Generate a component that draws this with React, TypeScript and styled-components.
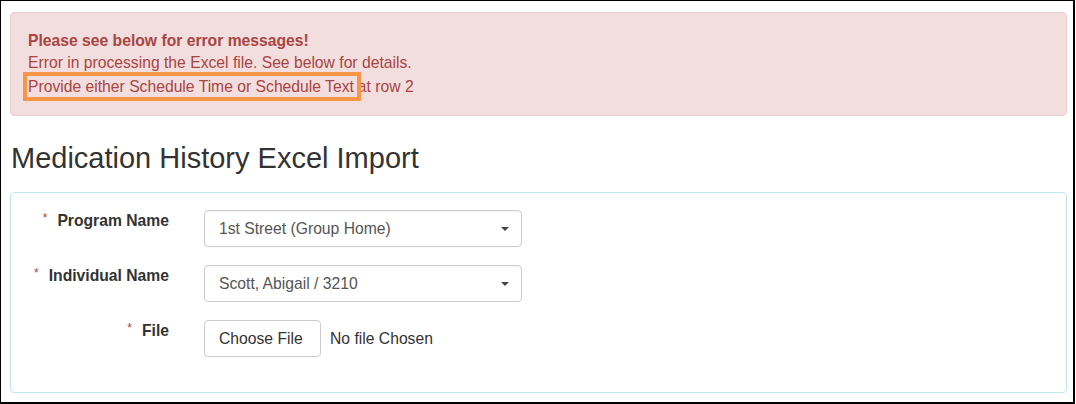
import styled, { createGlobalStyle } from "styled-components";

const GlobalStyle = createGlobalStyle`
  html, body {
    margin: 0;
    padding: 0;
    background: #fff;
  }
  body {
    font-family: "Liberation Sans", Arial, sans-serif;
    font-size: 15.7px;
    line-height: 22px;
    color: #333;
  }
`;

const Frame = styled.div`
  box-sizing: border-box;
  width: 1075px;
  height: 404px;
  border: 1px solid #000;
  border-right-width: 2px;
  border-bottom-width: 2px;
  padding: 11px 6px 0 9px;
  overflow: hidden;
`;

const Alert = styled.div`
  background-color: #f2dede;
  border: 1px solid #ebccd1;
  border-radius: 4px;
  color: #a94442;
  padding: 17px;
`;

const AlertLine = styled.div<{ $bold?: boolean; $gap?: number }>`
  font-weight: ${(p) => (p.$bold ? "bold" : "normal")};
  margin-top: ${(p) => p.$gap ?? 0}px;
  white-space: nowrap;
`;

const Highlight = styled.span`
  outline: 4px solid #f79646;
  outline-offset: 1px;
  padding: 1px 2px 1px 0;
  margin-right: 2px;
`;

const Title = styled.h3`
  font-size: 29px;
  font-weight: normal;
  line-height: 32px;
  margin: 26px 0 18px 1px;
  color: #333;
`;

const Panel = styled.div`
  border: 1px solid #bce8f1;
  border-radius: 4px;
  padding: 17px 0 35px;
  display: flex;
  flex-direction: column;
  gap: 18px;
`;

const FormGroup = styled.div`
  display: grid;
  grid-template-columns: 158px 318px;
  column-gap: 35px;
  height: 37px;
`;

const Label = styled.label`
  font-weight: bold;
  text-align: right;
  white-space: nowrap;
`;

const Required = styled.span`
  color: #a94442;
  font-weight: normal;
  font-size: 12px;
  vertical-align: top;
  line-height: 16px;
  margin-right: 10px;
`;

const Select = styled.div`
  box-sizing: border-box;
  height: 37px;
  border: 1px solid #ccc;
  border-radius: 4px;
  background: #fff;
  color: #555;
  padding: 0 12px 0 14px;
  display: flex;
  align-items: center;
  justify-content: space-between;
  box-shadow: inset 0 1px 1px rgba(0, 0, 0, 0.04);
`;

const Caret = styled.span`
  width: 0;
  height: 0;
  border-top: 4px solid #444;
  border-left: 4.5px solid transparent;
  border-right: 4.5px solid transparent;
  margin-top: 1px;
`;

const FileControl = styled.div`
  display: flex;
  align-items: center;
  gap: 9px;
  white-space: nowrap;
`;

const FileButton = styled.button`
  box-sizing: border-box;
  height: 37px;
  width: 117px;
  border: 1px solid #ccc;
  border-radius: 4px;
  background: #fff;
  color: #333;
  font-family: inherit;
  font-size: 15.7px;
  padding: 0 0 0 14px;
  text-align: left;
`;

const fields = [
  { label: "Program Name", value: "1st Street (Group Home)" },
  { label: "Individual Name", value: "Scott, Abigail / 3210" },
];

export default function App() {
  return (
    <>
      <GlobalStyle />
      <Frame>
        <Alert>
          <AlertLine $bold>Please see below for error messages!</AlertLine>
          <AlertLine>Error in processing the Excel file. See below for details.</AlertLine>
          <AlertLine $gap={2}>
            <Highlight>Provide either Schedule Time or Schedule Text</Highlight>at row 2
          </AlertLine>
        </Alert>
        <Title>Medication History Excel Import</Title>
        <Panel>
          {fields.map((f) => (
            <FormGroup key={f.label}>
              <Label>
                <Required>*</Required>
                {f.label}
              </Label>
              <Select>
                <span>{f.value}</span>
                <Caret />
              </Select>
            </FormGroup>
          ))}
          <FormGroup>
            <Label>
              <Required>*</Required>
              File
            </Label>
            <FileControl>
              <FileButton type="button">Choose File</FileButton>
              <span>No file Chosen</span>
            </FileControl>
          </FormGroup>
        </Panel>
      </Frame>
    </>
  );
}
